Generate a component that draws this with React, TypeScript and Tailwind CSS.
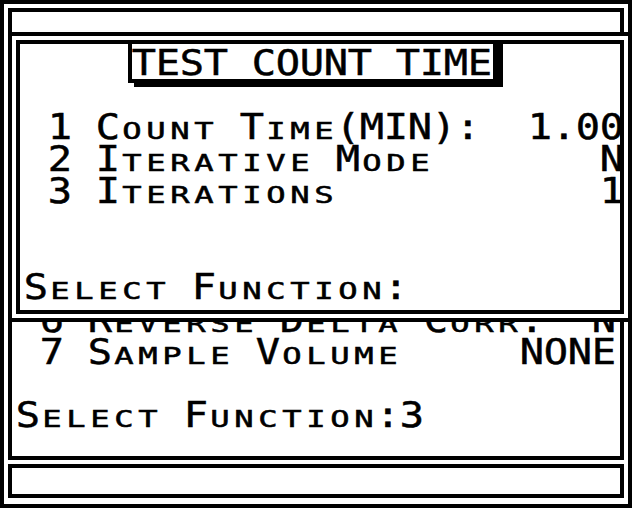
import clsx from 'clsx'

type LineProps = {
  text: string
  className?: string
}

// one character per 24px cell, lowercase shown as small caps
function Line({ text, className }: LineProps) {
  return (
    <div className={clsx('flex h-[32px] items-baseline', className)}>
      {Array.from(text).map((ch, i) => {
        const small = ch >= 'a' && ch <= 'z'
        return (
          <span
            key={i}
            className={clsx(
              'w-[24px] shrink-0 whitespace-pre text-center [-webkit-text-stroke:0.5px_#000]',
              small
                ? 'scale-x-[1.4] text-[23px] leading-[20px] uppercase'
                : 'scale-x-[1.12] text-[36px] leading-[32px]',
            )}
          >
            {ch}
          </span>
        )
      })}
    </div>
  )
}

const pad = (s: string, n: number) => s + ' '.repeat(Math.max(0, n - s.length))

export default function App() {
  return (
    <div className="relative h-[512px] w-[640px] bg-white font-['DejaVu_Sans_Mono',monospace] text-black">
      <div className="flex h-[508px] w-[632px] flex-col border-4 border-black p-1">
        <div className="h-[28px] border-4 border-black" />
        <div className="h-[424px] border-x-4 border-b-4 border-black pt-[268px]">
          <Line text={pad('6 Reverse Delta Corr:', 23) + 'N'} className="pl-[28px]" />
          <Line text={pad('7 Sample Volume', 20) + 'NONE'} className="pl-[28px]" />
          <Line text="Select Function:3" className="mt-[31px] pl-[4px]" />
        </div>
        <div className="mt-1 h-[34px] border-4 border-black" />
      </div>

      <div className="absolute left-[8px] top-[32px] h-[290px] w-[624px] border-4 border-black bg-white p-1">
        <div className="h-full border-4 border-black">
          <div className="-mt-[4px] ml-[108px] h-[43px] w-[369px] border-4 border-black bg-white pt-[3px] shadow-[6px_4px_0_0_#000]">
            <Line text="TEST COUNT TIME" />
          </div>
          <Line text="1 Count Time(MIN):  1.00" className="mt-[28px] pl-[28px]" />
          <Line text={pad('2 Iterative Mode', 23) + 'N'} className="pl-[28px]" />
          <Line text={pad('3 Iterations', 23) + '1'} className="pl-[28px]" />
          <Line text="Select Function:" className="mt-[64px] pl-[4px]" />
        </div>
      </div>
    </div>
  )
}
